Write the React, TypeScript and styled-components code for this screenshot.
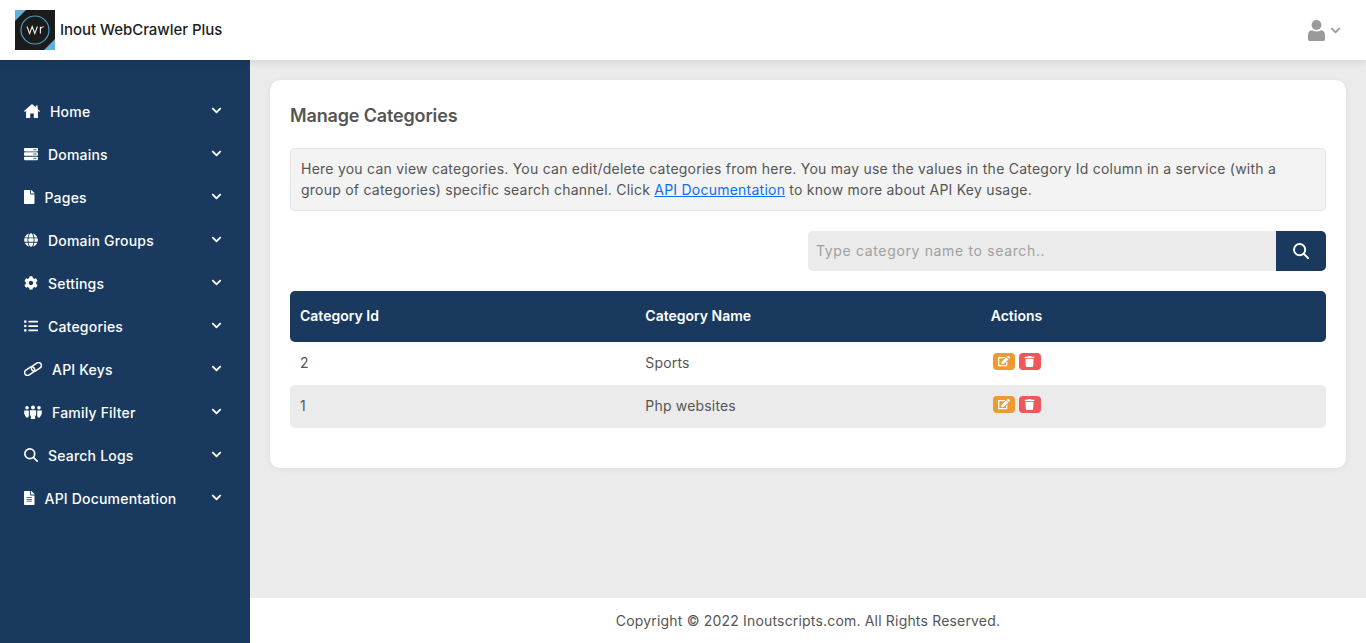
import React from "react";
import styled, { createGlobalStyle } from "styled-components";
import {
  FaServer, FaFile, FaGlobe, FaCog, FaListUl, FaFileAlt,
  FaChevronDown, FaEdit, FaTrash,
} from "react-icons/fa";

const NAVY = "#193a5e";
const FONT = `Inter, "Open Sans", "Liberation Sans", sans-serif`;

const Global = createGlobalStyle`
  html, body { margin: 0; padding: 0; height: 100%; }
  body { font-family: ${FONT}; font-size: 14px; letter-spacing: 0.18px; color: #555; background: #ebebeb; }
  * { box-sizing: border-box; }
`;

const Page = styled.div`
  display: grid;
  grid-template-rows: 60px 583px;
  grid-template-columns: 250px 1116px;
  width: 1366px;
  height: 643px;
  overflow: hidden;
`;

const Header = styled.header`
  grid-column: 1 / 3;
  display: flex;
  align-items: center;
  justify-content: space-between;
  padding: 0 25px 0 15px;
  background: #fff;
  box-shadow: 0 2px 8px rgba(0, 0, 0, 0.1);
  position: relative;
  z-index: 1;
`;

const Brand = styled.div`
  display: flex;
  align-items: center;
  gap: 5px;
`;

const BrandName = styled.span`
  font-size: 15px;
  font-weight: 500;
  letter-spacing: -0.05px;
  color: #1d1d1d;
  margin-top: -1px;
`;

const UserMenu = styled.div`
  display: flex;
  align-items: center;
  gap: 5px;
  color: #9a9a9a;
`;

const Sidebar = styled.nav`
  background: ${NAVY};
  padding: 30px 0 0 24px;
  display: flex;
  flex-direction: column;
`;

const NavItem = styled.a`
  display: flex;
  align-items: center;
  height: 43px;
  padding-right: 28px;
  color: #fff;
  font-size: 14px;
  font-weight: 500;
  letter-spacing: 0.2px;
`;

const NavIcon = styled.span<{ $width: number }>`
  display: inline-flex;
  margin-right: 10px;
  margin-top: -2px;
  svg { width: ${(p) => p.$width}px; height: 14px; }
`;

const NavLabel = styled.span`
  flex: 1;
`;

const NavChevron = styled.span`
  display: inline-flex;
  margin-top: -2px;
`;

const Main = styled.div`
  display: flex;
  flex-direction: column;
  min-height: 0;
`;

const Content = styled.main`
  flex: 1;
  padding: 20px;
`;

const Card = styled.section`
  background: #fff;
  border-radius: 10px;
  padding: 20px 20px 40px;
  box-shadow: 0 1px 6px rgba(0, 0, 0, 0.06);
`;

const Title = styled.h1`
  margin: 0 0 20px;
  height: 28px;
  line-height: 32px;
  font-size: 18px;
  font-weight: 600;
  letter-spacing: -0.15px;
  color: #555;
`;

const Info = styled.p`
  margin: 0 0 20px;
  padding: 9px 10px;
  border: 1px solid #e6e6e6;
  border-radius: 4px;
  background: #f3f3f3;
  line-height: 21px;
  font-size: 14px;
  letter-spacing: 0.235px;
  color: #555;
  height: 63px;
`;

const DocLink = styled.a`
  color: #0d6efd;
  text-decoration: underline;
`;

const SearchRow = styled.div`
  display: flex;
  justify-content: flex-end;
  margin-bottom: 20px;
`;

const SearchInput = styled.input`
  width: 468px;
  height: 40px;
  padding: 0 8px 1px;
  border: 0;
  border-radius: 5px 0 0 5px;
  background: #ebebeb;
  font-family: ${FONT};
  font-size: 14px;
  letter-spacing: 0.65px;
  color: #555;
  outline: none;
  &::placeholder { color: #a0a0a0; opacity: 1; }
`;

const SearchButton = styled.button`
  width: 50px;
  height: 40px;
  border: 0;
  border-radius: 0 5px 5px 0;
  background: ${NAVY};
  color: #fff;
  display: inline-flex;
  align-items: center;
  justify-content: center;
  padding: 0;
`;

const Table = styled.table`
  width: 100%;
  table-layout: fixed;
  border-collapse: separate;
  border-spacing: 0;
`;

const Th = styled.th`
  height: 51px;
  padding: 0 10px 2px;
  background: ${NAVY};
  color: #fff;
  text-align: left;
  font-size: 14px;
  font-weight: 600;
  letter-spacing: 0;
  &:first-child { border-radius: 5px 0 0 5px; }
  &:last-child { border-radius: 0 5px 5px 0; }
`;

const Td = styled.td<{ $shaded: boolean }>`
  height: 43px;
  padding: 0 10px 2px;
  background: ${(p) => (p.$shaded ? "#ebebeb" : "#fff")};
  color: #555;
  font-size: 14px;
  &:first-child { border-radius: 5px 0 0 5px; }
  &:last-child { border-radius: 0 5px 5px 0; }
`;

const Actions = styled.div`
  display: flex;
  gap: 4px;
  padding: 0 0 3px 2px;
`;

const ActionButton = styled.button<{ $color: string }>`
  width: 22px;
  height: 17px;
  border: 0;
  border-radius: 4px;
  padding: 0;
  background: ${(p) => p.$color};
  color: #fff;
  display: inline-flex;
  align-items: center;
  justify-content: center;
`;

const Footer = styled.footer`
  height: 45px;
  display: flex;
  align-items: center;
  justify-content: center;
  background: #fff;
  font-size: 14px;
  color: #555;
`;

const Logo = () => (
  <svg width="40" height="40" viewBox="0 0 40 40" aria-hidden="true">
    <rect width="40" height="40" fill="#1b1b1b" />
    <polygon points="0,0 11,0 0,11" fill="#62afd9" />
    <polygon points="40,29 40,40 29,40" fill="#62afd9" />
    <circle cx="20" cy="20" r="14" fill="none" stroke="#4a9cc7" strokeWidth="1.2" />
    <path d="M12 16.500l2.600 7 2.600-7 2.600 7 2.600-7M25.400 23.500V16.800M25.400 19.200c.6-1.800 1.900-2.400 3.200-2.400" fill="none" stroke="#efefef" strokeWidth="1.100" />
  </svg>
);

const HomeIcon = () => (
  <svg viewBox="0 0 16 14" fill="currentColor" aria-hidden="true">
    <path d="M8 0 11.800 3.300V1.400h1.900v3.600L16 7l-.8 1-1.300-1.100V14H9.800V9.400H6.200V14H2.100V6.900L.8 8 0 7z" />
  </svg>
);

const LinkIcon = () => (
  <svg viewBox="0 0 18 14" fill="none" stroke="currentColor" strokeWidth="1.500" aria-hidden="true">
    <rect x="0.200" y="6.200" width="10.800" height="5.800" rx="2.900" transform="rotate(-35 5.600 9.100)" />
    <rect x="7" y="2" width="10.800" height="5.800" rx="2.900" transform="rotate(-35 12.400 4.900)" />
  </svg>
);

const FamilyIcon = () => (
  <svg viewBox="0 0 18 14" fill="currentColor" aria-hidden="true">
    <circle cx="3" cy="2.800" r="1.800" />
    <circle cx="9" cy="2.400" r="2" />
    <circle cx="15" cy="2.800" r="1.800" />
    <path d="M0.200 5.600h4.600v5.400l-.8 1.400H2.200L.2 8.800z" />
    <path d="M17.800 5.600h-4.600v5.400l.8 1.400h1.800l2-3.600z" />
    <path d="M5.900 5.200h6.200v5l-1 .8V14H6.900v-3l-1-.8z" />
  </svg>
);

const SearchGlyph = ({ size = 14 }: { size?: number }) => (
  <svg width={size} height={size} viewBox="0 0 14 14" fill="none" stroke="currentColor" strokeWidth="1.700" strokeLinecap="round" aria-hidden="true">
    <circle cx="5.800" cy="5.800" r="4.900" />
    <path d="M9.400 9.400 13.200 13.200" />
  </svg>
);

const UserGlyph = () => (
  <svg width="17" height="21" viewBox="0 0 17 21" fill="currentColor" aria-hidden="true">
    <circle cx="8.500" cy="5" r="4.900" />
    <path d="M0 15c0-3.200 2-4.800 4-4.800 1.200.8 2.800 1.200 4.500 1.200s3.300-.4 4.500-1.200c2 0 4 1.600 4 4.800v4.200c0 1-.8 1.800-1.800 1.800H1.800C.8 21 0 20.200 0 19.200z" />
  </svg>
);

const NAV: [string, React.ComponentType, number][] = [
  ["Home", HomeIcon, 16],
  ["Domains", FaServer, 14],
  ["Pages", FaFile, 10.5],
  ["Domain Groups", FaGlobe, 14],
  ["Settings", FaCog, 14],
  ["Categories", FaListUl, 14],
  ["API Keys", LinkIcon, 18],
  ["Family Filter", FamilyIcon, 18],
  ["Search Logs", SearchGlyph, 14],
  ["API Documentation", FaFileAlt, 10.5],
];

const ROWS: [string, string][] = [["2", "Sports"], ["1", "Php websites"]];

export default function App() {
  return (
    <Page>
      <Global />
      <Header>
        <Brand>
          <Logo />
          <BrandName>Inout WebCrawler Plus</BrandName>
        </Brand>
        <UserMenu>
          <UserGlyph />
          <FaChevronDown size={11} />
        </UserMenu>
      </Header>
      <Sidebar>
        {NAV.map(([label, Icon, width]) => (
          <NavItem key={label}>
            <NavIcon $width={width}><Icon /></NavIcon>
            <NavLabel>{label}</NavLabel>
            <NavChevron><FaChevronDown size={11} /></NavChevron>
          </NavItem>
        ))}
      </Sidebar>
      <Main>
        <Content>
          <Card>
            <Title>Manage Categories</Title>
            <Info>
              Here you can view categories. You can edit/delete categories from here. You may use the values in the Category Id column in a service (with a group of categories) specific search channel. Click <DocLink href="#">API Documentation</DocLink> to know more about API Key usage.
            </Info>
            <SearchRow>
              <SearchInput placeholder="Type category name to search.." />
              <SearchButton aria-label="Search"><SearchGlyph size={16} /></SearchButton>
            </SearchRow>
            <Table>
              <thead>
                <tr>
                  <Th>Category Id</Th>
                  <Th>Category Name</Th>
                  <Th>Actions</Th>
                </tr>
              </thead>
              <tbody>
                {ROWS.map(([id, name], i) => (
                  <tr key={id}>
                    <Td $shaded={i === 1}>{id}</Td>
                    <Td $shaded={i === 1}>{name}</Td>
                    <Td $shaded={i === 1}>
                      <Actions>
                        <ActionButton $color="#ee9a33" aria-label="Edit"><FaEdit size={12} /></ActionButton>
                        <ActionButton $color="#f0565b" aria-label="Delete"><FaTrash size={11} /></ActionButton>
                      </Actions>
                    </Td>
                  </tr>
                ))}
              </tbody>
            </Table>
          </Card>
        </Content>
        <Footer>Copyright © 2022 Inoutscripts.com. All Rights Reserved.</Footer>
      </Main>
    </Page>
  );
}
